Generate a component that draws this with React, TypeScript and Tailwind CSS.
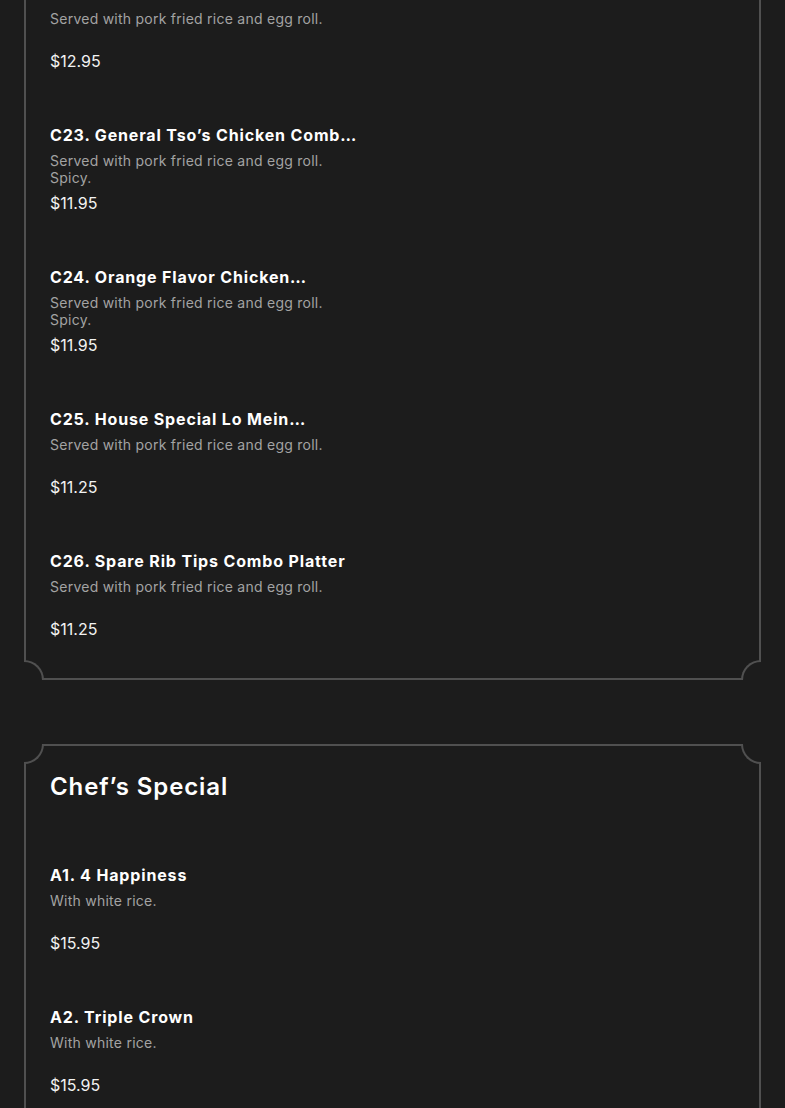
import React from 'react'

interface MenuItem {
	title: string
	desc: string
	price: string
}

// titles as the menu shows them (long names are clipped with an ellipsis)
const combos: MenuItem[] = [
	{ title: 'C22. Sesame Chicken Combo Platter', desc: 'Served with pork fried rice and egg roll.', price: '$12.95' },
	{ title: 'C23. General Tso’s Chicken Comb…', desc: 'Served with pork fried rice and egg roll. Spicy.', price: '$11.95' },
	{ title: 'C24. Orange Flavor Chicken…', desc: 'Served with pork fried rice and egg roll. Spicy.', price: '$11.95' },
	{ title: 'C25. House Special Lo Mein…', desc: 'Served with pork fried rice and egg roll.', price: '$11.25' },
	{ title: 'C26. Spare Rib Tips Combo Platter', desc: 'Served with pork fried rice and egg roll.', price: '$11.25' },
]

const specials: MenuItem[] = [
	{ title: 'A1. 4 Happiness', desc: 'With white rice.', price: '$15.95' },
	{ title: 'A2. Triple Crown', desc: 'With white rice.', price: '$15.95' },
	{ title: 'A3. Seafood Delight', desc: 'With white rice.', price: '$16.95' },
]

const Item = ({ item }: { item: MenuItem }) => (
	<div className="flex w-[300px] flex-col">
		<p className="whitespace-nowrap text-[16px] leading-[24px] font-bold tracking-[0.85px] text-white">{item.title}</p>
		<p className="mt-[5px] min-h-[34px] text-[14px] leading-[17px] tracking-[0.25px] text-[#a3a3a3]">{item.desc}</p>
		<p className="mt-[5px] text-[16px] leading-[24px] text-[#f2f2f2]">{item.price}</p>
	</div>
)

// concave corner pieces sitting over the card border
const CornerTL = () => (
	<div className="absolute -top-[2px] -left-[2px] w-[20px] h-[20px] bg-[#1c1c1c] border-r-2 border-b-2 border-[#505050] rounded-br-[20px]" />
)
const CornerTR = () => (
	<div className="absolute -top-[2px] -right-[2px] w-[20px] h-[20px] bg-[#1c1c1c] border-l-2 border-b-2 border-[#505050] rounded-bl-[20px]" />
)
const CornerBL = () => (
	<div className="absolute -bottom-[2px] -left-[2px] w-[20px] h-[20px] bg-[#1c1c1c] border-r-2 border-t-2 border-[#505050] rounded-tr-[20px]" />
)
const CornerBR = () => (
	<div className="absolute -bottom-[2px] -right-[2px] w-[20px] h-[20px] bg-[#1c1c1c] border-l-2 border-t-2 border-[#505050] rounded-tl-[20px]" />
)

const App = () => {
	return (
		<div className="flex h-[1108px] flex-col gap-16 overflow-hidden bg-[#1c1c1c] font-['Inter',sans-serif]">
			<div className="relative mx-6 -mt-[19px] flex flex-col gap-[50px] border-x-2 border-b-2 border-[#505050] px-6 pb-[37px]">
				{combos.map((item) => (
					<Item key={item.title} item={item} />
				))}
				<CornerBL />
				<CornerBR />
			</div>

			<div className="relative mx-6 flex flex-col gap-[60px] border-x-2 border-t-2 border-[#505050] px-6 pt-[25px]">
				<CornerTL />
				<CornerTR />
				<h2 className="text-[24px] leading-[32px] font-semibold tracking-[0.9px] text-white">Chef’s Special</h2>
				<div className="flex flex-col gap-[50px]">
					{specials.map((item) => (
						<Item key={item.title} item={item} />
					))}
				</div>
			</div>
		</div>
	)
}

export default App
